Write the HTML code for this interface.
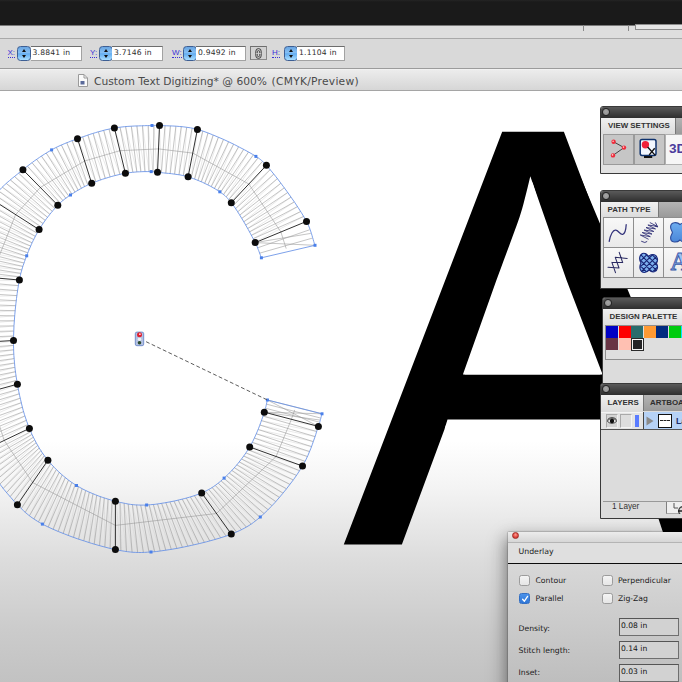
<!DOCTYPE html>
<html><head><meta charset="utf-8"><title>Custom Text Digitizing</title>
<style>
*{box-sizing:border-box;margin:0;padding:0}
html,body{width:682px;height:682px;overflow:hidden;background:#fff}
body{position:relative;font-family:"Liberation Sans",sans-serif;color:#222}
.abs{position:absolute}
#canvasbg{left:0;top:91px;width:682px;height:591px;background:linear-gradient(#fff 0,#fff 350px,#f4f4f4 395px,#dcdcdc 470px,#cbcbcb 540px,#c2c2c2 591px)}
#art{left:0;top:0;width:682px;height:682px}
#topdark{left:0;top:0;width:682px;height:26px;background:linear-gradient(#242424 0,#1a1a1a 2px,#1a1a1a 25px,#7a7a7a 25px,#7a7a7a 26px)}
#band{left:0;top:26px;width:682px;height:13px;background:#dedede}
#ctrl{left:0;top:38px;width:682px;height:31px;background:#d9d9d9;border-top:1px solid #a9a9a9;border-bottom:1px solid #9c9c9c}
#tabbar{left:0;top:69px;width:682px;height:22px;border-top:1px solid #f2f2f2;background:linear-gradient(#ececec,#d6d6d6);border-bottom:1px solid #a5a5a5}
.lbl{font-size:8px;color:#3a32d8;top:48px;height:10px;line-height:10px;border-bottom:1px dotted #3a32d8}
.step{top:45.5px;width:14px;height:15px;border-radius:3.5px;background:linear-gradient(#6aa6e2 0,#86c0f4 45%,#62acf0 52%,#a8deff 100%);border:1px solid #3d5f94}
.step:before{content:"";position:absolute;left:4px;top:2px;border:2.6px solid transparent;border-top:0;border-bottom:3.4px solid #111}
.step:after{content:"";position:absolute;left:4px;top:8px;border:2.6px solid transparent;border-bottom:0;border-top:3.4px solid #111}
.inp{top:46px;height:14.5px;background:#fff;border:1px solid #a2a2a2;border-top-color:#6d6d6d;border-left:0;font-family:"DejaVu Sans","Liberation Sans",sans-serif;font-size:7.6px;letter-spacing:.2px;line-height:12px;padding-left:2px;color:#2c2c2c;white-space:nowrap;overflow:hidden}
.panel{background:#dcdcdc;border:1px solid #3a3a3a;overflow:hidden;border-top-left-radius:3px}
.ptitle{left:0;top:0;width:100%;height:11px;background:linear-gradient(#5a5a5a,#2e2e2e)}
.pclose{left:1px;top:1px;width:7.6px;height:7.6px;border-radius:50%;background:radial-gradient(circle at 50% 40%,#a6a6a6,#8a8a8a);border:1px solid #1e1e1e}
.ptabs{left:0;top:11px;width:100%;background:linear-gradient(#b4b4b4,#9a9a9a)}
.ptab{top:0;left:0;height:100%;background:linear-gradient(#f0f0f0,#dcdcdc);border-right:1px solid #777;font-weight:bold;font-size:7.9px;color:#333;white-space:nowrap}
.btn{background:linear-gradient(#f8f8f8,#e9e9e9);border:1px solid #8e8e8e}
.dlgtxt{font-family:"DejaVu Sans","Liberation Sans",sans-serif;font-size:7.7px;color:#1c1c1c;white-space:nowrap;line-height:10px;height:10px}
.cb{width:10.5px;height:10.5px;border-radius:2.5px;background:linear-gradient(#f4f4f4,#e6e6e6);border:1px solid #9c9c9c}
.fld{left:111px;width:60px;height:18px;background:#d2d2d2;border:1px solid #6f6f6f;border-top-color:#555;border-left-color:#5e5e5e;font-family:"DejaVu Sans","Liberation Sans",sans-serif;font-size:7.6px;color:#111;line-height:10px;padding:2px 0 0 1px;white-space:nowrap}
</style></head><body>
<div class="abs" id="canvasbg"></div>
<svg class="abs" id="art" viewBox="0 0 682 682">
<text transform="translate(345.5,542.5) scale(0.9405,1)" font-family="Liberation Sans, sans-serif" font-size="594" fill="#000" stroke="#000" stroke-width="4" stroke-linejoin="miter">A</text>
<path d="M462.9,374.6H604V382H460Z M556,132.4H561.8L632,300H598Z" fill="#000"/>
<path d="M530.3,176.2C526.5,192 523,207 519.6,217C513,236 503,262 496.3,280.6L462.9,374.6H602.6L566.5,280Z M447.5,419.5H602V428.4H444.7Z" fill="#fff"/>
<path d="M648,516H657.6L663.2,533H652Z" fill="#e8e8e8"/>

<path d="M255.0,242.2L303.7,216.4M253.2,238.7L300.7,211.5M251.4,235.3L297.5,206.6M249.5,231.9L294.3,201.9M247.7,228.5L291.1,197.1M245.7,225.1L287.7,192.5M243.8,221.8L284.3,187.8M241.8,218.4L280.9,183.2M239.8,215.1L277.4,178.6M237.7,211.9L273.8,174.1M235.6,208.6L270.2,169.6M233.4,205.4L266.4,165.3M231.0,202.4L262.5,161.3M228.7,199.6L258.1,157.8M226.2,196.9L253.4,154.8M223.5,194.5L248.5,152.0M220.5,192.3L243.6,149.4M217.5,190.3L238.6,146.8M214.4,188.4L233.6,144.2M211.2,186.6L228.6,141.8M207.9,184.9L223.5,139.4M204.7,183.3L218.4,137.2M201.3,181.8L213.2,135.0M198.0,180.4L208.0,132.9M194.6,179.0L202.8,131.0M191.2,177.8L197.4,129.4M187.6,176.7L192.1,128.2M183.3,175.6L186.7,127.3M179.0,174.8L181.3,126.6M174.6,174.1L175.9,126.2M170.2,173.6L170.4,125.9M165.8,173.1L165.0,125.7M161.4,172.7L159.5,125.5M157.0,172.2L153.9,125.4M153.0,171.7L148.2,125.6M149.0,171.6L142.5,125.7M145.0,171.6L136.9,125.9M140.9,171.7L131.3,126.2M136.9,172.0L125.6,126.6M132.9,172.3L120.0,127.2M128.9,172.8L114.4,128.0M124.8,173.4L109.0,129.1M119.9,174.4L103.7,130.4M115.0,175.6L98.4,131.8M110.1,176.9L93.1,133.4M105.3,178.4L87.9,135.1M100.5,180.0L82.7,136.9M95.8,181.7L77.5,138.7M91.3,183.5L72.1,140.7M87.9,185.0L66.7,142.7M84.6,186.6L61.4,145.0M81.4,188.3L56.3,147.4M78.2,190.2L51.2,150.1M75.0,192.1L46.2,153.0M71.9,194.1L41.4,156.1M68.8,196.1L36.6,159.4M65.8,198.2L32.0,162.7M62.9,200.5L27.4,166.2M60.1,202.9L22.9,169.8M57.5,205.5L18.7,173.2M54.9,208.4L14.5,176.5M52.3,211.3L10.3,179.9M49.9,214.3L6.2,183.4M47.6,217.3L2.3,187.1M45.3,220.4L-1.4,191.0M43.0,223.5L-4.8,195.1M40.9,226.7L-8.0,199.5M38.9,230.0L-10.9,204.1M37.1,233.1L-13.6,208.8M35.3,236.3L-16.1,213.6M33.7,239.5L-18.5,218.5M32.1,242.8L-20.7,223.5M30.7,246.1L-22.8,228.5M29.2,249.4L-24.9,233.5M27.9,252.8L-26.8,238.6M26.6,256.2L-28.7,243.7M25.3,259.6L-30.4,248.9M24.0,263.0L-32.1,254.1M22.9,266.4L-33.7,259.3M21.8,269.9L-35.2,264.5M20.9,273.4L-36.7,269.7M20.1,276.9L-38.0,275.0M19.3,280.6L-39.3,280.6M18.4,285.6L-40.4,286.3M17.6,290.6L-41.4,292.0M16.9,295.6L-42.2,297.8M16.3,300.7L-42.9,303.5M15.7,305.7L-43.5,309.3M15.2,310.7L-44.0,315.1M14.7,315.8L-44.3,320.8M14.3,320.8L-44.6,326.6M14.0,325.9L-44.8,332.4M13.7,331.0L-44.9,338.2M13.6,336.0L-45.0,344.0M13.5,341.0L-45.0,349.6M13.5,345.4L-44.9,355.3M13.6,349.8L-44.7,360.9M13.8,354.2L-44.5,366.5M14.1,358.6L-44.1,372.1M14.5,363.0L-43.6,377.8M14.9,367.3L-42.9,383.4M15.4,371.7L-42.1,388.9M16.1,376.0L-41.1,394.5M16.7,380.4L-40.0,400.0M17.5,384.7L-38.7,405.5M18.3,389.3L-37.3,410.9M19.2,393.8L-35.8,416.3M20.2,398.2L-34.1,421.6M21.3,402.7L-32.3,426.9M22.4,407.2L-30.3,432.2M23.6,411.6L-28.2,437.3M24.9,416.0L-26.0,442.5M26.4,420.3L-23.6,447.5M27.9,424.6L-21.0,452.5M29.5,428.7L-18.4,457.2M30.8,431.6L-15.6,461.9M32.0,434.4L-12.7,466.5M33.3,437.2L-9.7,471.0M34.7,439.9L-6.6,475.4M36.2,442.7L-3.4,479.8M37.7,445.4L-0.2,484.1M39.2,448.0L3.2,488.4M40.9,450.6L6.6,492.6M42.6,453.2L10.1,496.7M44.4,455.7L13.7,500.8M46.2,458.2L17.4,504.7M48.2,460.7L21.3,508.6M50.8,463.7L25.2,512.3M53.5,466.7L29.4,515.8M56.3,469.6L33.9,519.0M59.3,472.3L38.5,521.9M62.2,475.0L43.3,524.6M65.3,477.6L48.2,527.0M68.5,480.1L53.1,529.3M71.8,482.4L58.2,531.4M75.1,484.6L63.2,533.5M78.5,486.7L68.3,535.4M82.1,488.7L73.5,537.3M85.7,490.5L78.6,539.1M89.3,492.2L83.8,540.9M93.0,493.8L89.0,542.5M96.7,495.2L94.2,544.1M100.5,496.6L99.5,545.6M104.3,497.9L104.8,547.1M108.1,499.2L110.1,548.4M112.0,500.3L115.4,549.6M115.9,501.3L120.9,550.7M120.0,502.3L126.5,551.6M124.1,503.2L132.1,552.2M128.2,504.0L137.7,552.5M132.4,504.6L143.4,552.4M136.5,504.9L149.0,552.1M140.7,505.1L154.6,551.7M144.9,505.1L160.2,551.0M149.1,504.8L165.8,550.2M153.3,504.5L171.3,549.4M157.5,504.0L176.9,548.4M161.6,503.4L182.4,547.3M165.8,502.7L187.9,546.2M169.9,501.9L193.4,545.0M174.0,501.1L198.9,543.7M178.1,500.1L204.4,542.4M182.2,499.1L209.8,540.9M186.3,498.1L215.3,539.4M190.3,496.9L220.7,537.8M194.3,495.6L226.0,536.0M198.3,494.3L231.3,534.1M202.1,492.7L236.5,532.0M205.5,491.2L241.5,529.7M208.8,489.5L246.4,527.1M212.1,487.5L251.2,524.1M215.2,485.4L255.7,520.8M218.2,483.2L260.0,517.3M221.0,480.8L264.1,513.6M223.9,478.3L268.1,509.7M226.6,475.8L272.0,505.7M229.3,473.1L275.8,501.6M231.8,470.4L279.4,497.4M234.4,467.7L283.0,493.1M236.8,464.8L286.5,488.8M239.2,461.9L289.9,484.4M241.5,459.0L293.2,479.9M243.7,456.0L296.5,475.4M245.9,452.9L299.6,470.7M248.0,449.8L302.5,466.0M250.0,446.5L305.1,461.3M252.3,442.4L307.4,456.5M254.4,438.1L309.6,451.6M256.3,433.8L311.5,446.6M258.1,429.5L313.3,441.6M259.8,425.0L315.1,436.6M261.4,420.6L316.7,431.5M263.0,416.1L318.4,426.4" stroke="#d2d2d2" stroke-width="0.45" fill="none"/>
<path d="M303.7,216.4L253.2,238.7M300.7,211.5L251.4,235.3M297.5,206.6L249.5,231.9M294.3,201.9L247.7,228.5M291.1,197.1L245.7,225.1M287.7,192.5L243.8,221.8M284.3,187.8L241.8,218.4M280.9,183.2L239.8,215.1M277.4,178.6L237.7,211.9M273.8,174.1L235.6,208.6M270.2,169.6L233.4,205.4M262.5,161.3L228.7,199.6M258.1,157.8L226.2,196.9M253.4,154.8L223.5,194.5M248.5,152.0L220.5,192.3M243.6,149.4L217.5,190.3M238.6,146.8L214.4,188.4M233.6,144.2L211.2,186.6M228.6,141.8L207.9,184.9M223.5,139.4L204.7,183.3M218.4,137.2L201.3,181.8M213.2,135.0L198.0,180.4M208.0,132.9L194.6,179.0M202.8,131.0L191.2,177.8M192.1,128.2L183.3,175.6M186.7,127.3L179.0,174.8M181.3,126.6L174.6,174.1M175.9,126.2L170.2,173.6M170.4,125.9L165.8,173.1M165.0,125.7L161.4,172.7M153.9,125.4L153.0,171.7M148.2,125.6L149.0,171.6M142.5,125.7L145.0,171.6M136.9,125.9L140.9,171.7M131.3,126.2L136.9,172.0M125.6,126.6L132.9,172.3M120.0,127.2L128.9,172.8M109.0,129.1L119.9,174.4M103.7,130.4L115.0,175.6M98.4,131.8L110.1,176.9M93.1,133.4L105.3,178.4M87.9,135.1L100.5,180.0M82.7,136.9L95.8,181.7M72.1,140.7L87.9,185.0M66.7,142.7L84.6,186.6M61.4,145.0L81.4,188.3M56.3,147.4L78.2,190.2M51.2,150.1L75.0,192.1M46.2,153.0L71.9,194.1M41.4,156.1L68.8,196.1M36.6,159.4L65.8,198.2M32.0,162.7L62.9,200.5M27.4,166.2L60.1,202.9M18.7,173.2L54.9,208.4M14.5,176.5L52.3,211.3M10.3,179.9L49.9,214.3M6.2,183.4L47.6,217.3M2.3,187.1L45.3,220.4M-1.4,191.0L43.0,223.5M-4.8,195.1L40.9,226.7M-10.9,204.1L37.1,233.1M-13.6,208.8L35.3,236.3M-16.1,213.6L33.7,239.5M-18.5,218.5L32.1,242.8M-20.7,223.5L30.7,246.1M-22.8,228.5L29.2,249.4M-24.9,233.5L27.9,252.8M-26.8,238.6L26.6,256.2M-28.7,243.7L25.3,259.6M-30.4,248.9L24.0,263.0M-32.1,254.1L22.9,266.4M-33.7,259.3L21.8,269.9M-35.2,264.5L20.9,273.4M-36.7,269.7L20.1,276.9M-39.3,280.6L18.4,285.6M-40.4,286.3L17.6,290.6M-41.4,292.0L16.9,295.6M-42.2,297.8L16.3,300.7M-42.9,303.5L15.7,305.7M-43.5,309.3L15.2,310.7M-44.0,315.1L14.7,315.8M-44.3,320.8L14.3,320.8M-44.6,326.6L14.0,325.9M-44.8,332.4L13.7,331.0M-44.9,338.2L13.6,336.0M-45.0,349.6L13.5,345.4M-44.9,355.3L13.6,349.8M-44.7,360.9L13.8,354.2M-44.5,366.5L14.1,358.6M-44.1,372.1L14.5,363.0M-43.6,377.8L14.9,367.3M-42.9,383.4L15.4,371.7M-42.1,388.9L16.1,376.0M-41.1,394.5L16.7,380.4M-38.7,405.5L18.3,389.3M-37.3,410.9L19.2,393.8M-35.8,416.3L20.2,398.2M-34.1,421.6L21.3,402.7M-32.3,426.9L22.4,407.2M-30.3,432.2L23.6,411.6M-28.2,437.3L24.9,416.0M-26.0,442.5L26.4,420.3M-23.6,447.5L27.9,424.6M-18.4,457.2L30.8,431.6M-15.6,461.9L32.0,434.4M-12.7,466.5L33.3,437.2M-9.7,471.0L34.7,439.9M-6.6,475.4L36.2,442.7M-3.4,479.8L37.7,445.4M-0.2,484.1L39.2,448.0M3.2,488.4L40.9,450.6M6.6,492.6L42.6,453.2M10.1,496.7L44.4,455.7M13.7,500.8L46.2,458.2M21.3,508.6L50.8,463.7M25.2,512.3L53.5,466.7M29.4,515.8L56.3,469.6M33.9,519.0L59.3,472.3M38.5,521.9L62.2,475.0M43.3,524.6L65.3,477.6M48.2,527.0L68.5,480.1M53.1,529.3L71.8,482.4M58.2,531.4L75.1,484.6M63.2,533.5L78.5,486.7M68.3,535.4L82.1,488.7M73.5,537.3L85.7,490.5M78.6,539.1L89.3,492.2M83.8,540.9L93.0,493.8M89.0,542.5L96.7,495.2M94.2,544.1L100.5,496.6M99.5,545.6L104.3,497.9M104.8,547.1L108.1,499.2M110.1,548.4L112.0,500.3M120.9,550.7L120.0,502.3M126.5,551.6L124.1,503.2M132.1,552.2L128.2,504.0M137.7,552.5L132.4,504.6M143.4,552.4L136.5,504.9M149.0,552.1L140.7,505.1M154.6,551.7L144.9,505.1M160.2,551.0L149.1,504.8M165.8,550.2L153.3,504.5M171.3,549.4L157.5,504.0M176.9,548.4L161.6,503.4M182.4,547.3L165.8,502.7M187.9,546.2L169.9,501.9M193.4,545.0L174.0,501.1M198.9,543.7L178.1,500.1M204.4,542.4L182.2,499.1M209.8,540.9L186.3,498.1M215.3,539.4L190.3,496.9M220.7,537.8L194.3,495.6M226.0,536.0L198.3,494.3M236.5,532.0L205.5,491.2M241.5,529.7L208.8,489.5M246.4,527.1L212.1,487.5M251.2,524.1L215.2,485.4M255.7,520.8L218.2,483.2M260.0,517.3L221.0,480.8M264.1,513.6L223.9,478.3M268.1,509.7L226.6,475.8M272.0,505.7L229.3,473.1M275.8,501.6L231.8,470.4M279.4,497.4L234.4,467.7M283.0,493.1L236.8,464.8M286.5,488.8L239.2,461.9M289.9,484.4L241.5,459.0M293.2,479.9L243.7,456.0M296.5,475.4L245.9,452.9M299.6,470.7L248.0,449.8M305.1,461.3L252.3,442.4M307.4,456.5L254.4,438.1M309.6,451.6L256.3,433.8M311.5,446.6L258.1,429.5M313.3,441.6L259.8,425.0M315.1,436.6L261.4,420.6M316.7,431.5L263.0,416.1M309.5,229.8L257.4,247.9M312.4,238.1L259.5,253.2M255.2,242.6L315.0,245.3M255.2,242.6L310.8,233.4M319.6,422.2L265.3,408.2M320.8,418.1L266.3,404.1M322.0,413.8L267.4,400.0M267.4,400.0L318.4,426.4M264.3,412.2L322.0,413.8M264.3,412.2L320.2,420.1" stroke="#959595" stroke-width="0.55" fill="none" stroke-linejoin="bevel"/>
<polyline points="286.2,248.6 280.9,232.0 248.8,184.0 192.8,153.1 158.5,148.9 119.9,150.7 84.6,161.0 40.3,187.5 15.6,214.6 -9.3,277.5 -15.8,342.2 -11.3,392.1 4.2,440.4 32.6,482.5 115.4,525.4 216.5,513.5 276.1,456.5 291.4,419.3 294.7,409.9" stroke="#929292" stroke-width="0.55" fill="none"/>
<path d="M315.0,245.3L314.3,243.3L313.7,241.4L313.2,239.5L312.6,237.6L312.1,235.7L311.5,233.8L310.9,231.9L310.2,229.9L309.5,227.9L308.6,225.8L307.6,223.7L306.5,221.4L304.2,217.3L301.4,212.7L298.2,207.7L294.7,202.4L290.9,197.0L287.0,191.5L283.1,186.2L279.3,181.1L275.6,176.3L272.1,172.0L269.0,168.3L266.4,165.3L265.4,164.2L264.5,163.3L263.7,162.4L262.9,161.7L262.2,161.0L261.5,160.4L260.8,159.8L260.0,159.2L259.2,158.6L258.2,157.9L257.1,157.2L255.9,156.4L252.7,154.4L248.9,152.2L244.5,149.8L239.6,147.3L234.5,144.6L229.1,142.0L223.5,139.4L217.9,137.0L212.4,134.7L207.1,132.6L202.1,130.8L197.4,129.4L193.9,128.5L190.4,127.8L186.8,127.3L183.2,126.8L179.7,126.5L176.2,126.2L172.9,126.0L169.8,125.9L166.8,125.8L164.1,125.7L161.6,125.6L159.5,125.5L158.7,125.5L158.0,125.4L157.4,125.4L156.8,125.4L156.3,125.4L155.7,125.4L155.2,125.4L154.7,125.4L154.1,125.4L153.5,125.4L152.8,125.5L152.0,125.5L149.9,125.6L147.4,125.6L144.6,125.7L141.6,125.8L138.3,125.9L134.9,126.0L131.4,126.2L127.9,126.4L124.4,126.7L120.9,127.1L117.6,127.5L114.4,128.0L111.3,128.6L108.1,129.3L104.9,130.0L101.8,130.9L98.6,131.7L95.4,132.7L92.3,133.6L89.2,134.6L86.2,135.7L83.2,136.7L80.3,137.7L77.5,138.7L75.2,139.5L72.9,140.4L70.7,141.2L68.5,142.1L66.3,142.9L64.2,143.8L62.1,144.7L60.0,145.6L57.9,146.6L55.8,147.6L53.7,148.7L51.6,149.9L49.2,151.3L46.8,152.7L44.4,154.2L42.0,155.7L39.6,157.3L37.2,159.0L34.8,160.6L32.4,162.4L30.0,164.2L27.6,166.0L25.3,167.9L22.9,169.8L20.3,171.9L17.6,174.0L14.9,176.2L12.2,178.3L9.6,180.5L6.9,182.8L4.3,185.2L1.7,187.7L-0.8,190.4L-3.3,193.2L-5.7,196.3L-8.0,199.5L-11.1,204.4L-14.1,209.8L-17.1,215.6L-19.9,221.7L-22.7,228.2L-25.4,234.8L-27.9,241.6L-30.3,248.4L-32.5,255.2L-34.5,262.0L-36.4,268.6L-38.0,275.0L-39.3,280.8L-40.5,286.6L-41.5,292.5L-42.3,298.3L-43.0,304.2L-43.6,310.0L-44.0,315.8L-44.4,321.6L-44.6,327.3L-44.8,332.9L-44.9,338.5L-45.0,344.0L-45.0,348.9L-44.9,353.7L-44.8,358.5L-44.6,363.2L-44.4,367.9L-44.1,372.6L-43.6,377.2L-43.1,381.8L-42.5,386.4L-41.8,390.9L-40.9,395.5L-40.0,400.0L-39.0,404.5L-37.8,409.0L-36.6,413.4L-35.3,417.9L-33.9,422.3L-32.4,426.7L-30.8,431.1L-29.0,435.4L-27.2,439.7L-25.3,444.0L-23.2,448.3L-21.0,452.5L-18.4,457.1L-15.6,461.8L-12.6,466.5L-9.5,471.3L-6.2,476.0L-2.8,480.7L0.7,485.2L4.1,489.6L7.6,493.8L11.0,497.7L14.2,501.4L17.4,504.7L19.5,506.8L21.5,508.8L23.4,510.6L25.2,512.3L27.1,513.9L28.9,515.4L30.9,516.9L32.9,518.3L35.0,519.7L37.3,521.2L39.7,522.6L42.4,524.1L47.1,526.5L52.5,529.0L58.3,531.5L64.6,534.0L71.1,536.5L77.8,538.9L84.6,541.1L91.4,543.3L97.9,545.2L104.2,546.9L110.0,548.4L115.4,549.6L118.7,550.3L121.8,550.8L124.8,551.3L127.6,551.7L130.3,552.0L133.0,552.3L135.8,552.4L138.5,552.5L141.4,552.5L144.4,552.4L147.6,552.2L151.0,552.0L156.7,551.5L163.0,550.6L169.8,549.6L177.0,548.4L184.4,546.9L191.8,545.3L199.3,543.6L206.5,541.8L213.5,539.9L220.0,538.0L226.0,536.1L231.3,534.1L234.3,532.9L237.1,531.7L239.8,530.5L242.2,529.3L244.6,528.1L246.8,526.8L249.0,525.5L251.2,524.1L253.4,522.5L255.6,520.8L257.9,519.0L260.3,517.0L263.8,513.8L267.5,510.3L271.3,506.4L275.2,502.3L279.0,497.9L282.8,493.4L286.6,488.7L290.2,484.0L293.7,479.4L296.9,474.8L299.8,470.3L302.5,466.0L304.4,462.6L306.2,459.1L307.9,455.5L309.4,451.9L310.9,448.3L312.2,444.8L313.4,441.3L314.6,437.9L315.7,434.7L316.6,431.7L317.5,428.9L318.4,426.4L318.8,425.1L319.2,423.9L319.6,422.8L319.9,421.7L320.2,420.7L320.4,419.7L320.7,418.7L320.9,417.8L321.2,416.8L321.4,415.8L321.7,414.8L322.0,413.8L322.0,413.8M261.4,257.8L260.9,256.6L260.4,255.3L260.0,254.1L259.6,253.0L259.1,251.8L258.7,250.6L258.2,249.4L257.7,248.1L257.2,246.8L256.6,245.5L255.9,244.1L255.2,242.6L253.8,239.8L252.1,236.7L250.3,233.3L248.3,229.6L246.2,225.9L244.0,222.1L241.7,218.3L239.5,214.7L237.3,211.2L235.2,208.0L233.2,205.1L231.3,202.7L230.3,201.5L229.4,200.3L228.5,199.3L227.6,198.4L226.8,197.5L225.9,196.6L225.1,195.8L224.2,195.0L223.2,194.3L222.2,193.5L221.0,192.7L219.8,191.8L217.8,190.5L215.5,189.1L213.1,187.7L210.6,186.3L207.9,184.9L205.1,183.6L202.3,182.2L199.4,181.0L196.5,179.8L193.6,178.7L190.8,177.7L188.1,176.8L185.5,176.1L182.8,175.5L180.0,174.9L177.1,174.5L174.2,174.1L171.4,173.7L168.7,173.4L166.0,173.2L163.6,172.9L161.3,172.7L159.2,172.5L157.5,172.3L156.8,172.2L156.2,172.1L155.7,172.0L155.2,172.0L154.8,171.9L154.3,171.8L153.9,171.8L153.4,171.7L153.0,171.7L152.4,171.6L151.9,171.6L151.2,171.6L149.7,171.6L147.9,171.6L146.0,171.6L144.0,171.6L141.8,171.7L139.6,171.8L137.2,171.9L134.9,172.1L132.5,172.3L130.1,172.6L127.7,172.9L125.4,173.3L122.7,173.8L119.9,174.4L117.0,175.1L114.1,175.8L111.2,176.6L108.2,177.5L105.3,178.4L102.4,179.3L99.6,180.3L96.8,181.3L94.2,182.3L91.7,183.3L89.7,184.2L87.7,185.1L85.8,186.0L83.9,186.9L82.1,187.9L80.3,188.9L78.6,189.9L76.9,190.9L75.2,191.9L73.6,193.0L72.0,194.0L70.5,195.0L69.3,195.8L68.1,196.6L67.0,197.4L66.0,198.1L64.9,198.9L63.9,199.7L62.9,200.5L61.9,201.3L60.9,202.2L59.9,203.1L58.9,204.1L57.8,205.2L56.3,206.8L54.7,208.5L53.1,210.4L51.5,212.3L49.8,214.4L48.2,216.5L46.5,218.6L44.9,220.8L43.4,223.0L41.9,225.2L40.5,227.4L39.1,229.6L37.9,231.7L36.7,233.8L35.5,236.0L34.4,238.2L33.3,240.4L32.2,242.6L31.2,244.8L30.3,247.0L29.3,249.2L28.4,251.4L27.5,253.6L26.7,255.8L25.9,257.8L25.2,259.7L24.5,261.6L23.9,263.5L23.2,265.3L22.6,267.2L22.0,269.1L21.5,271.1L20.9,273.1L20.4,275.3L19.9,277.6L19.4,280.0L18.6,284.1L17.9,288.6L17.2,293.4L16.5,298.5L15.9,303.7L15.3,309.1L14.8,314.6L14.4,320.0L14.0,325.4L13.8,330.7L13.6,335.7L13.5,340.5L13.5,344.4L13.6,348.2L13.7,351.9L13.9,355.6L14.2,359.2L14.5,362.8L14.8,366.4L15.2,369.9L15.7,373.5L16.2,377.0L16.8,380.6L17.4,384.2L18.1,387.9L18.8,391.7L19.6,395.5L20.5,399.3L21.4,403.1L22.3,406.9L23.3,410.7L24.4,414.4L25.6,418.0L26.8,421.6L28.1,425.0L29.4,428.4L30.7,431.3L31.9,434.2L33.3,437.1L34.7,439.8L36.1,442.6L37.6,445.2L39.1,447.9L40.8,450.5L42.4,453.0L44.2,455.5L46.0,457.9L47.9,460.3L49.9,462.7L52.0,465.0L54.2,467.3L56.4,469.6L58.7,471.8L61.1,474.0L63.5,476.1L66.0,478.1L68.5,480.1L71.1,482.0L73.8,483.8L76.5,485.5L79.4,487.2L82.5,488.9L85.7,490.5L88.9,492.0L92.2,493.4L95.6,494.8L98.9,496.1L102.3,497.3L105.7,498.4L109.0,499.4L112.2,500.4L115.4,501.2L118.1,501.9L120.6,502.5L123.2,503.0L125.7,503.5L128.1,504.0L130.6,504.4L133.1,504.7L135.7,504.9L138.3,505.0L140.9,505.1L143.7,505.1L146.6,505.0L150.7,504.7L155.2,504.3L159.9,503.6L164.8,502.8L169.8,501.9L174.9,500.9L179.9,499.7L184.8,498.5L189.5,497.2L193.9,495.8L198.0,494.4L201.7,492.9L204.0,491.9L206.2,490.8L208.2,489.8L210.2,488.7L212.0,487.6L213.8,486.4L215.5,485.2L217.2,483.9L218.9,482.6L220.6,481.2L222.3,479.7L224.1,478.1L226.3,476.0L228.6,473.8L230.9,471.4L233.2,469.0L235.5,466.4L237.7,463.8L239.9,461.0L242.0,458.3L244.1,455.5L246.1,452.6L247.9,449.8L249.7,447.0L251.3,444.2L252.8,441.3L254.3,438.2L255.7,435.1L257.1,431.9L258.4,428.8L259.6,425.7L260.7,422.7L261.7,419.8L262.7,417.1L263.5,414.5L264.3,412.2L264.7,411.0L265.0,409.8L265.3,408.7L265.6,407.7L265.9,406.7L266.1,405.7L266.3,404.8L266.5,403.9L266.7,402.9L266.9,402.0L267.2,401.0L267.4,400.0L267.4,400.0M315.0,245.3L261.4,257.8M322.0,413.8L267.4,400.0" stroke="#6590e6" stroke-width="0.85" fill="none"/>
<path d="M306.5,221.4L255.2,242.6M266.4,165.3L231.3,202.7M197.4,129.4L188.1,176.8M159.5,125.5L157.5,172.3M114.4,128.0L125.4,173.3M77.5,138.7L91.7,183.3M22.9,169.8L57.8,205.2M-8.0,199.5L39.1,229.6M-38.0,275.0L19.4,280.0M-45.0,344.0L13.5,340.5M-40.0,400.0L17.4,384.2M-21.0,452.5L29.4,428.4M17.4,504.7L47.9,460.3M115.4,549.6L115.4,501.2M231.3,534.1L201.7,492.9M302.5,466.0L249.7,447.0M318.4,426.4L264.3,412.2" stroke="#262626" stroke-width="0.95" fill="none"/>
<rect x="254.4" y="154.9" width="3" height="3" fill="#4a80ea"/><rect x="150.5" y="124.0" width="3" height="3" fill="#4a80ea"/><rect x="50.1" y="148.4" width="3" height="3" fill="#4a80ea"/><rect x="40.9" y="522.6" width="3" height="3" fill="#4a80ea"/><rect x="149.5" y="550.5" width="3" height="3" fill="#4a80ea"/><rect x="258.8" y="515.5" width="3" height="3" fill="#4a80ea"/><rect x="218.3" y="190.3" width="3" height="3" fill="#4a80ea"/><rect x="149.7" y="170.1" width="3" height="3" fill="#4a80ea"/><rect x="69.0" y="193.5" width="3" height="3" fill="#4a80ea"/><rect x="25.2" y="254.3" width="3" height="3" fill="#4a80ea"/><rect x="75.0" y="484.0" width="3" height="3" fill="#4a80ea"/><rect x="145.1" y="503.5" width="3" height="3" fill="#4a80ea"/><rect x="222.6" y="476.6" width="3" height="3" fill="#4a80ea"/><rect x="313.5" y="243.8" width="3" height="3" fill="#4a80ea"/><rect x="259.9" y="256.3" width="3" height="3" fill="#4a80ea"/><rect x="320.5" y="412.3" width="3" height="3" fill="#4a80ea"/><rect x="265.9" y="398.5" width="3" height="3" fill="#4a80ea"/>
<circle cx="306.5" cy="221.4" r="3.5" fill="#0c0c0c"/><circle cx="255.2" cy="242.6" r="3.5" fill="#0c0c0c"/><circle cx="266.4" cy="165.3" r="3.5" fill="#0c0c0c"/><circle cx="231.3" cy="202.7" r="3.5" fill="#0c0c0c"/><circle cx="197.4" cy="129.4" r="3.5" fill="#0c0c0c"/><circle cx="188.1" cy="176.8" r="3.5" fill="#0c0c0c"/><circle cx="159.5" cy="125.5" r="3.5" fill="#0c0c0c"/><circle cx="157.5" cy="172.3" r="3.5" fill="#0c0c0c"/><circle cx="114.4" cy="128.0" r="3.5" fill="#0c0c0c"/><circle cx="125.4" cy="173.3" r="3.5" fill="#0c0c0c"/><circle cx="77.5" cy="138.7" r="3.5" fill="#0c0c0c"/><circle cx="91.7" cy="183.3" r="3.5" fill="#0c0c0c"/><circle cx="22.9" cy="169.8" r="3.5" fill="#0c0c0c"/><circle cx="57.8" cy="205.2" r="3.5" fill="#0c0c0c"/><circle cx="-8.0" cy="199.5" r="3.5" fill="#0c0c0c"/><circle cx="39.1" cy="229.6" r="3.5" fill="#0c0c0c"/><circle cx="19.4" cy="280.0" r="3.5" fill="#0c0c0c"/><circle cx="13.5" cy="340.5" r="3.5" fill="#0c0c0c"/><circle cx="17.4" cy="384.2" r="3.5" fill="#0c0c0c"/><circle cx="29.4" cy="428.4" r="3.5" fill="#0c0c0c"/><circle cx="17.4" cy="504.7" r="3.5" fill="#0c0c0c"/><circle cx="47.9" cy="460.3" r="3.5" fill="#0c0c0c"/><circle cx="115.4" cy="549.6" r="3.5" fill="#0c0c0c"/><circle cx="115.4" cy="501.2" r="3.5" fill="#0c0c0c"/><circle cx="231.3" cy="534.1" r="3.5" fill="#0c0c0c"/><circle cx="201.7" cy="492.9" r="3.5" fill="#0c0c0c"/><circle cx="302.5" cy="466.0" r="3.5" fill="#0c0c0c"/><circle cx="249.7" cy="447.0" r="3.5" fill="#0c0c0c"/><circle cx="318.4" cy="426.4" r="3.5" fill="#0c0c0c"/><circle cx="264.3" cy="412.2" r="3.5" fill="#0c0c0c"/>
<line x1="146.1" y1="341.7" x2="267.4" y2="400" stroke="#4a4a4a" stroke-width="0.9" stroke-dasharray="3.8,2.4"/>
<rect x="135.3" y="332.1" width="8.4" height="13.6" rx="1.6" fill="#b4c2e2" stroke="#5d7cc4" stroke-width="0.8"/>
<circle cx="139.5" cy="339.2" r="1.7" fill="#eef0f4"/>
<circle cx="139.5" cy="334.8" r="2.5" fill="#e02030"/><circle cx="139.9" cy="334.2" r="0.9" fill="#ffd8d8"/>
<circle cx="139.5" cy="342.8" r="1.8" fill="#2c4a2c"/>
</svg>
<div class="abs" id="topdark"></div>
<div class="abs" id="band"></div>
<div class="abs" style="left:583px;top:25px;width:1px;height:6px;background:#8a8a8a"></div>
<div class="abs" style="left:628px;top:25px;width:1px;height:6px;background:#8a8a8a"></div>
<div class="abs" style="left:635px;top:24px;width:60px;height:6px;background:#e6e6e6;border:1px solid #8c8c8c"></div>
<div class="abs" id="ctrl"></div>
<div class="abs" id="tabbar"></div>
<div class="abs lbl" style="left:7.5px">X:</div>
<div class="abs step" style="left:17px"></div>
<div class="abs inp" style="left:30.5px;width:51px">3.8841 in</div>
<div class="abs lbl" style="left:90px">Y:</div>
<div class="abs step" style="left:99px"></div>
<div class="abs inp" style="left:112px;width:51px">3.7146 in</div>
<div class="abs lbl" style="left:172px">W:</div>
<div class="abs step" style="left:183px"></div>
<div class="abs inp" style="left:196px;width:50px">0.9492 in</div>
<div class="abs" style="left:250px;top:46px;width:17px;height:14px;background:#d2d2d2;border:1px solid #8a8a8a;border-top-color:#6e6e6e;border-left-color:#777">
<svg class="abs" style="left:4px;top:0.5px" width="7" height="11" viewBox="0 0 7 11"><rect x="0.8" y="0.6" width="5.4" height="9.8" rx="2.7" fill="none" stroke="#2e2e2e" stroke-width="0.9"/><rect x="2.3" y="2.6" width="2.4" height="6" rx="1.2" fill="none" stroke="#2e2e2e" stroke-width="0.8"/><path d="M0.8,5.5H6.2" stroke="#d2d2d2" stroke-width="0.8"/></svg></div>
<div class="abs lbl" style="left:272px">H:</div>
<div class="abs step" style="left:284px"></div>
<div class="abs inp" style="left:297px;width:48px">1.1104 in</div>
<svg class="abs" style="left:78px;top:74px" width="10" height="13" viewBox="0 0 10 13"><path d="M0.5,0.5H6L9.5,4V12.5H0.5Z" fill="#fafafa" stroke="#9a9a9a" stroke-width="1"/><path d="M6,0.5V4H9.5" fill="none" stroke="#9a9a9a" stroke-width="1"/><rect x="2.5" y="7" width="4" height="3.5" fill="#5a6a9a"/></svg>
<div class="abs" id="doctitle" style="left:94px;top:75px;font-family:'DejaVu Sans','Liberation Sans',sans-serif;font-size:10.7px;line-height:14px;color:#4a4a4a;white-space:nowrap">Custom Text Digitizing* @ 600% <span style="letter-spacing:.25px;margin-left:1.2px">(CMYK/Preview)</span></div>

<!-- VIEW SETTINGS -->
<div class="abs panel" style="left:600px;top:106px;width:90px;height:68px;background:#e2e2e2">
 <div class="abs ptitle"></div><div class="abs pclose"></div>
 <div class="abs ptabs" style="height:16px"><div class="abs ptab" style="width:75px;line-height:16px;padding-left:7px">VIEW SETTINGS</div></div>
 <div class="abs" style="left:2px;top:27px;width:31px;height:31px;background:#c6c6c6;border:1px solid #9a9a9a">
  <svg class="abs" style="left:0;top:0" width="29" height="29" viewBox="0 0 29 29"><path d="M9.6,6.8L20,12.6L9,20.4" fill="none" stroke="#333" stroke-width="0.9"/><circle cx="9.6" cy="6.8" r="2.2" fill="#f02a3a"/><circle cx="20" cy="12.6" r="2.2" fill="#f02a3a"/><circle cx="9" cy="20.4" r="2.2" fill="#f02a3a"/><circle cx="9.1" cy="6.3" r="0.8" fill="#ffd0d0"/><circle cx="19.5" cy="12.1" r="0.8" fill="#ffd0d0"/><circle cx="8.5" cy="19.9" r="0.8" fill="#ffd0d0"/></svg>
 </div>
 <div class="abs" style="left:33px;top:27px;width:31px;height:31px;background:#c6c6c6;border:1px solid #9a9a9a">
  <svg class="abs" style="left:0;top:0" width="29" height="29" viewBox="0 0 29 29"><rect x="5.2" y="4.6" width="15.8" height="15.8" rx="1.8" fill="#f2f7ff" stroke="#0e326e" stroke-width="1.5"/><rect x="9" y="21" width="8.2" height="2" fill="#111"/><circle cx="10.4" cy="9.8" r="3.7" fill="#f0203a"/><path d="M12.6,12L20.3,20.4M19.7,13.2L14.2,19.9" stroke="#111" stroke-width="1.4" fill="none"/></svg>
 </div>
 <div class="abs" style="left:64px;top:27px;width:31px;height:31px;background:#f6f6f6;border:1px solid #b0b0b0;font-weight:bold;font-size:13.6px;line-height:27px;padding-left:3px;color:#4b3b9c;white-space:nowrap">3D</div>
</div>
<!-- PATH TYPE -->
<div class="abs panel" style="left:600px;top:190px;width:90px;height:99px;background:#e0e0e0">
 <div class="abs ptitle"></div><div class="abs pclose"></div>
 <div class="abs ptabs" style="height:15px"><div class="abs ptab" style="width:58px;line-height:15px;padding-left:6.5px">PATH TYPE</div></div>
 <div class="abs btn" style="left:2px;top:26px;width:31px;height:31px"><svg class="abs" style="left:0;top:0" width="29" height="29" viewBox="0 0 29 29"><path d="M5.2,23.4C6.4,17 9,11.3 12,12.2C15,13 16.4,17.4 19,16.2C21.6,15 22,10 22.2,6.6" fill="none" stroke="#34347c" stroke-width="1.25" stroke-linecap="round"/></svg></div>
 <div class="abs btn" style="left:32px;top:26px;width:31px;height:31px"><svg class="abs" style="left:0;top:0" width="29" height="29" viewBox="0 0 29 29"><path d="M14.6,21.3L6.3,17.0L16.3,18.7L8.2,14.5L18.0,16.1L10.1,12.0L19.8,13.5L12.0,9.5L21.5,10.9L13.9,7.0L23.2,8.3L15.8,4.5" fill="none" stroke="#2c2c74" stroke-width="0.85" stroke-linejoin="round"/><path d="M7.2,23.2L10.8,24.5L13.2,23.4" fill="none" stroke="#2c2c74" stroke-width="0.9"/><path d="M21.3,4.4L23.8,9L20.6,8" fill="none" stroke="#2c2c74" stroke-width="0.9"/></svg></div>
 <div class="abs btn" style="left:62px;top:26px;width:31px;height:31px">
  <svg class="abs" style="left:0;top:0" width="29" height="29" viewBox="0 0 29 29"><defs><linearGradient id="bg1" x1="0" y1="0" x2="0" y2="1"><stop offset="0" stop-color="#6eaef0"/><stop offset="1" stop-color="#4a86d8"/></linearGradient></defs><path d="M6.6,9C6.6,4 13,3.5 16,6.5C19,3.5 30,4 30,9V20C30,25 19,25.5 16,22C13,25 6.6,25 6.6,20C6.6,17 8.4,16 8.4,14.5C8.4,13 6.6,12 6.6,9Z" fill="url(#bg1)" stroke="#2c4c9c" stroke-width="1.1"/></svg></div>
 <div class="abs btn" style="left:2px;top:56px;width:31px;height:31px"><svg class="abs" style="left:0;top:0" width="29" height="29" viewBox="0 0 29 29"><path d="M15.2,4.3L18.7,14.6L7.9,14.4L11.5,24.7M23.2,10.4L11.2,9.2L15,20L3.9,19.3" fill="none" stroke="#2a2a62" stroke-width="1.05" stroke-linejoin="round" stroke-linecap="round"/></svg></div>
 <div class="abs btn" style="left:32px;top:56px;width:31px;height:31px">
  <svg class="abs" style="left:0;top:0" width="29" height="29" viewBox="0 0 29 29"><defs><clipPath id="qf"><path d="M6.6,14.9C4,11 5,5 9.5,4.8C12.5,4.7 13.5,7 14.6,8C16,6.5 18.5,5.8 20.5,6.4C24.5,7.6 24.5,12.5 22.8,15.2C24.5,18 24.5,23 20.5,24.2C18,24.8 16.3,23.5 15.2,22.3C13.8,24 12,25 10,24.9C5.5,24.6 4.3,19 6.6,14.9Z"/></clipPath></defs><g transform="translate(0.7,0.7) scale(0.955)"><path d="M6.6,14.9C4,11 5,5 9.5,4.8C12.5,4.7 13.5,7 14.6,8C16,6.5 18.5,5.8 20.5,6.4C24.5,7.6 24.5,12.5 22.8,15.2C24.5,18 24.5,23 20.5,24.2C18,24.8 16.3,23.5 15.2,22.3C13.8,24 12,25 10,24.9C5.5,24.6 4.3,19 6.6,14.9Z" fill="#7cb0ee" stroke="#1c2c80" stroke-width="1.2"/><g clip-path="url(#qf)" stroke="#182472" stroke-width="1.15" fill="none"><path d="M-30,0L0,30M1,0L-29,30M-24,0L6,30M7,0L-23,30M-18,0L12,30M13,0L-17,30M-12,0L18,30M19,0L-11,30M-6,0L24,30M25,0L-5,30M0,0L30,30M31,0L1,30M6,0L36,30M37,0L7,30M12,0L42,30M43,0L13,30M18,0L48,30M49,0L19,30M24,0L54,30M55,0L25,30M30,0L60,30M61,0L31,30M36,0L66,30M67,0L37,30M42,0L72,30M73,0L43,30M48,0L78,30M79,0L49,30M54,0L84,30M85,0L55,30"/></g></g></svg></div>
 <div class="abs btn" style="left:62px;top:56px;width:31px;height:31px;font-family:'Liberation Serif',serif;font-weight:bold;font-size:25.5px;line-height:28px;padding-left:6.5px;color:#9cc2f2;-webkit-text-stroke:0.9px #3a5aa8">A</div>
</div>
<!-- DESIGN PALETTE -->
<div class="abs panel" style="left:602px;top:297px;width:90px;height:87px;background:#dcdcdc">
 <div class="abs ptitle"></div><div class="abs pclose"></div>
 <div class="abs" style="left:0;top:11px;width:100%;height:16px;background:linear-gradient(#f0f0f0,#dedede);font-weight:bold;font-size:7.9px;color:#333;line-height:16px;padding-left:6.5px;white-space:nowrap">DESIGN PALETTE</div>
 <div class="abs" style="left:2px;top:27px;width:90px;height:35px;background:#dedede;border:1px solid #8e8e8e"></div>
 <div class="abs" style="left:3px;top:28px;width:12px;height:12px;background:#0000c4"></div>
 <div class="abs" style="left:15.5px;top:28px;width:12px;height:12px;background:#fe0000"></div>
 <div class="abs" style="left:28px;top:28px;width:12px;height:12px;background:#2a6c6c"></div>
 <div class="abs" style="left:40.5px;top:28px;width:12px;height:12px;background:#ff9a33"></div>
 <div class="abs" style="left:53px;top:28px;width:12px;height:12px;background:#002a80"></div>
 <div class="abs" style="left:65.5px;top:28px;width:12px;height:12px;background:#00cc10"></div>
 <div class="abs" style="left:78px;top:28px;width:12px;height:12px;background:#00e8ff"></div>
 <div class="abs" style="left:3px;top:40px;width:12px;height:12px;background:#683444"></div>
 <div class="abs" style="left:15.5px;top:40px;width:12px;height:12px;background:#ffc0b2"></div>
 <div class="abs" style="left:28.5px;top:40.5px;width:11.5px;height:11.5px;background:#262426;border:1.2px solid #f4f4f4;outline:1px solid #2a2a2a"></div>
</div>
<!-- LAYERS -->
<div class="abs panel" style="left:600px;top:383px;width:90px;height:136px;background:#dcdcdc">
 <div class="abs ptitle"></div><div class="abs pclose"></div>
 <div class="abs ptabs" style="height:16px"><div class="abs ptab" style="width:43px;line-height:16px;padding-left:6.5px;font-size:7.9px">LAYERS</div>
  <div class="abs" style="left:49px;top:0;font-weight:bold;font-size:7.9px;line-height:16px;color:#2e2e2e;white-space:nowrap">ARTBOARDS</div></div>
 <div class="abs" style="left:0;top:28px;width:100%;height:18px;background:#e4e4e4;border-top:1px solid #f4f4f4;border-bottom:1px solid #555"></div>
 <div class="abs" style="left:42px;top:28px;width:60px;height:17px;background:#b6d2f6;border-left:1px solid #444"></div>
 <div class="abs" style="left:5px;top:30px;width:12px;height:14px;background:#d4d4d4;border:1px solid #f0f0f0;border-top-color:#aaa;border-left-color:#aaa">
  <svg class="abs" style="left:0;top:2px" width="10" height="8" viewBox="0 0 10 8"><path d="M0.3,4C2,1 8,1 9.7,4C8,7 2,7 0.3,4Z" fill="#eee" stroke="#222" stroke-width="0.8"/><circle cx="5" cy="4" r="2.2" fill="#111"/><path d="M0.5,2.5C3,0 7,0 9.5,2.5" stroke="#222" stroke-width="0.8" fill="none"/></svg></div>
 <div class="abs" style="left:19px;top:30px;width:12px;height:14px;background:#dedede;border:1px solid #f4f4f4;border-top-color:#aaa;border-left-color:#aaa"></div>
 <div class="abs" style="left:34px;top:31px;width:4px;height:12px;background:#5a7cff"></div>
 <svg class="abs" style="left:45px;top:32px" width="8" height="10" viewBox="0 0 8 10"><path d="M0.5,0.5L7.5,5L0.5,9.5Z" fill="#8a8a8a"/></svg>
 <div class="abs" style="left:57px;top:30px;width:14px;height:14px;background:#fff;border:1px solid #111"><div class="abs" style="left:1px;top:5px;width:10px;height:0;border-top:1.5px dashed #222"></div></div>
 <div class="abs" style="left:75px;top:31px;font-weight:bold;font-size:8.6px;line-height:12px;color:#1c2a66;white-space:nowrap">Layer 1</div>
 <div class="abs" style="left:2px;top:117px;width:100%;height:18px;border-top:1px solid #999"></div>
 <div class="abs" style="left:11px;top:117px;font-size:8.2px;line-height:12px;color:#333;white-space:nowrap">1 Layer</div>
 <div class="abs" style="left:65px;top:118px;width:30px;height:12px;background:#efefef;border-left:1px solid #808080;border-bottom:1px solid #aaa">
  <svg class="abs" style="left:6px;top:0" width="20" height="12" viewBox="0 0 20 12"><path d="M1,1V6H5" fill="none" stroke="#555" stroke-width="1"/><circle cx="10" cy="9" r="5" fill="#444"/><circle cx="10" cy="9" r="3.6" fill="#ddd"/><path d="M5,9H15" stroke="#222" stroke-width="1.5"/></svg></div>
</div>

<div class="abs" id="dlg" style="left:508px;top:531.5px;width:184px;height:160px;background:linear-gradient(#dcdcdc 0,#d6d6d6 40px,#bebebe 150px);box-shadow:0 7px 14px 0 rgba(0,0,0,.36),-3px 6px 18px 2px rgba(0,0,0,.18),0 0 1.5px rgba(0,0,0,.55)">
 <div class="abs" style="left:0;top:0;width:100%;height:11px;background:linear-gradient(#ececec,#d6d6d6);border-bottom:1px solid #b4b4b4"></div>
 <div class="abs" style="left:4px;top:0.5px;width:7px;height:7px;border-radius:50%;background:radial-gradient(circle at 50% 35%,#ff9a90,#e0443e 60%,#b82a26);border:0.5px solid #a02a24"></div>
 <div class="abs" style="left:0;top:11px;width:100%;height:20.5px;background:#dfdfdf"></div>
 <div class="abs dlgtxt" style="left:10.5px;top:15px;font-size:7.8px">Underlay</div>
 <div class="abs" style="left:0;top:31.5px;width:100%;height:1.2px;background:#0c0c0c"></div>
 <div class="abs cb" style="left:11px;top:43.5px"></div>
 <div class="abs dlgtxt" style="left:27.5px;top:44.5px">Contour</div>
 <div class="abs cb" style="left:11px;top:61.5px;background:linear-gradient(#4a92ea,#2f76d6);border-color:#3470c4">
  <svg class="abs" style="left:0.5px;top:0.5px" width="8" height="8" viewBox="0 0 8 8"><path d="M1.6,4.2L3.4,6.2L6.6,1.4" fill="none" stroke="#fff" stroke-width="1.3" stroke-linecap="round" stroke-linejoin="round"/></svg></div>
 <div class="abs dlgtxt" style="left:27.5px;top:62.5px">Parallel</div>
 <div class="abs cb" style="left:94px;top:43.5px"></div>
 <div class="abs dlgtxt" style="left:110px;top:44.5px">Perpendicular</div>
 <div class="abs cb" style="left:94px;top:61.5px"></div>
 <div class="abs dlgtxt" style="left:110px;top:62.5px">Zig-Zag</div>
 <div class="abs dlgtxt" style="left:10.5px;top:92.5px">Density:</div>
 <div class="abs fld" style="top:86.5px">0.08 in</div>
 <div class="abs dlgtxt" style="left:10.5px;top:114.5px">Stitch length:</div>
 <div class="abs fld" style="top:109.5px">0.14 in</div>
 <div class="abs dlgtxt" style="left:10.5px;top:136.5px">Inset:</div>
 <div class="abs fld" style="top:132px">0.03 in</div>
</div>

</body></html>
